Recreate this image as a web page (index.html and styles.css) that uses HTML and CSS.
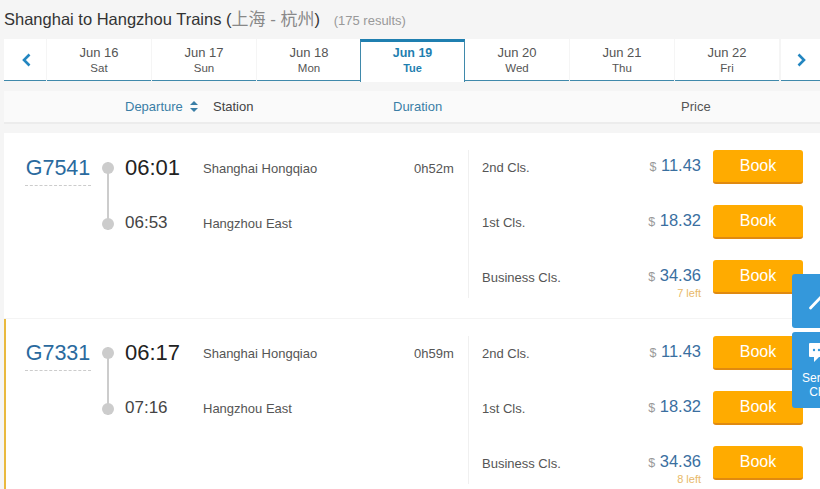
FILE: index.html
```html
<!DOCTYPE html>
<html lang="en">
<head>
  <meta charset="UTF-8" />
  <meta name="viewport" content="width=device-width, initial-scale=1.0" />
  <title>Shanghai to Hangzhou Trains</title>
  <link rel="stylesheet" href="styles.css">
</head>
<body>

  <div class="page">
    <h1 class="title">Shanghai to Hangzhou Trains (<span class="title-cn">上海 - 杭州</span>) <span class="results">(175 results)</span></h1>

    <div class="dates">
      <a class="date-arrow">
        <svg width="12" height="18" viewBox="0 0 12 18"><path d="M9.5 3.5 L4 9 L9.5 14.5" fill="none" stroke="#2386c0" stroke-width="2.6"/></svg>
      </a>
      <a class="date"><b>Jun 16</b><span>Sat</span></a>
      <a class="date"><b>Jun 17</b><span>Sun</span></a>
      <a class="date"><b>Jun 18</b><span>Mon</span></a>
      <a class="date active"><b>Jun 19</b><span>Tue</span></a>
      <a class="date"><b>Jun 20</b><span>Wed</span></a>
      <a class="date"><b>Jun 21</b><span>Thu</span></a>
      <a class="date"><b>Jun 22</b><span>Fri</span></a>
      <a class="date-arrow">
        <svg width="12" height="18" viewBox="0 0 12 18"><path d="M2.5 3.5 L8 9 L2.5 14.5" fill="none" stroke="#2386c0" stroke-width="2.6"/></svg>
      </a>
    </div>

    <div class="sort-bar">
      <div class="sort-departure">
        Departure
        <svg width="8" height="11" viewBox="0 0 8 11"><path d="M4 0 L8 4 H0 Z M0 7 H8 L4 11 Z" fill="#3a7ea6"/></svg>
      </div>
      <div class="sort-station">Station</div>
      <div class="sort-duration">Duration</div>
      <div class="sort-price">Price</div>
    </div>

    <div class="train">
      <div class="train-info">
        <div class="train-no"><a>G7541</a></div>
        <div class="line"><i></i><i></i></div>
        <div class="stops">
          <div class="stop first"><div class="time">06:01</div><div class="station">Shanghai Hongqiao</div><div class="duration">0h52m</div></div>
          <div class="stop"><div class="time">06:53</div><div class="station">Hangzhou East</div></div>
        </div>
      </div>
      <div class="seats">
        <div class="seat"><div class="seat-name">2nd Cls.</div><div class="price"><small>$</small> 11.43</div><button class="book">Book</button></div>
        <div class="seat"><div class="seat-name">1st Cls.</div><div class="price"><small>$</small> 18.32</div><button class="book">Book</button></div>
        <div class="seat"><div class="seat-name">Business Cls.</div><div class="price"><small>$</small> 34.36<em>7 left</em></div><button class="book">Book</button></div>
      </div>
    </div>

    <div class="train marked">
      <div class="train-info">
        <div class="train-no"><a>G7331</a></div>
        <div class="line"><i></i><i></i></div>
        <div class="stops">
          <div class="stop first"><div class="time">06:17</div><div class="station">Shanghai Hongqiao</div><div class="duration">0h59m</div></div>
          <div class="stop"><div class="time">07:16</div><div class="station">Hangzhou East</div></div>
        </div>
      </div>
      <div class="seats">
        <div class="seat"><div class="seat-name">2nd Cls.</div><div class="price"><small>$</small> 11.43</div><button class="book">Book</button></div>
        <div class="seat"><div class="seat-name">1st Cls.</div><div class="price"><small>$</small> 18.32</div><button class="book">Book</button></div>
        <div class="seat"><div class="seat-name">Business Cls.</div><div class="price"><small>$</small> 34.36<em>8 left</em></div><button class="book">Book</button></div>
      </div>
    </div>
  </div>

  <!-- floating side buttons -->
  <div class="side-tools">
    <a class="side-btn to-top">
      <svg width="30" height="30" viewBox="0 0 30 30"><path d="M3.5 22 L14 11 L25 22" fill="none" stroke="#fff" stroke-width="2.8" stroke-linecap="round"/></svg>
    </a>
    <a class="side-btn chat">
      <svg width="22" height="22" viewBox="0 0 22 22"><path d="M2 1 H20 Q21 1 21 2 V14 Q21 15 20 15 H11 L6 20 V15 H2 Q1 15 1 14 V2 Q1 1 2 1 Z" fill="#fff"/><circle cx="6" cy="8" r="1.2" fill="#3498db"/><circle cx="11" cy="8" r="1.2" fill="#3498db"/><circle cx="16" cy="8" r="1.2" fill="#3498db"/></svg>
      <span>Service Chat</span>
    </a>
  </div>

</body>
</html>
```

FILE: styles.css
```css
html, body {
  margin: 0;
  height: 489px;
  overflow: hidden;
}

body {
  font-family: "Liberation Sans", Arial, "Noto Sans CJK SC", sans-serif;
  background-color: #f5f5f5;
  color: #333;
}

.page {
  margin-left: 4px;
  width: 816px;
}

/* heading */
.title {
  margin: 0;
  height: 39px;
  padding-top: 7px;
  box-sizing: border-box;
  font-size: 16.5px;
  line-height: 24px;
  font-weight: normal;
  color: #333;
  white-space: nowrap;
}

.title-cn {
  font-size: 17px;
  color: #888;
}

.results {
  margin-left: 9px;
  font-size: 13px;
  color: #999;
}

/* date strip */
.dates {
  display: flex;
  height: 43px;
  width: 816px;
}

.date,
.date-arrow {
  display: flex;
  flex-direction: column;
  align-items: center;
  justify-content: center;
  box-sizing: border-box;
  background: #fff;
  border-bottom: 1px solid #3f89ab;
  height: 42px;
}

.date-arrow {
  width: 42px;
  flex: none;
  margin-right: 1px;
  padding-left: 1px;
}

.date-arrow:last-child {
  width: 39px;
  margin: 0 0 0 1px;
  padding-left: 3px;
}

.date {
  width: 104px;
  margin-right: 1px;
  flex: none;
  color: #555;
}

.date b {
  font-weight: normal;
  font-size: 13px;
  line-height: 16px;
}

.date span {
  font-size: 11.5px;
  line-height: 14px;
}

.date.active {
  height: 43px;
  width: 105px;
  margin-left: -2px;
  margin-right: 0;
  border: 1px solid #3f89ab;
  border-top: 3px solid #1f7fb0;
  border-bottom: 0;
  padding-bottom: 4px;
  color: #1f7fb0;
}

.date.active b,
.date.active span {
  font-weight: bold;
}

.date.active b {
  font-size: 12.5px;
}

.date.active span {
  font-size: 11px;
}

/* sort bar */
.sort-bar {
  display: flex;
  align-items: center;
  height: 33px;
  box-sizing: border-box;
  margin-top: 9px;
  width: 816px;
  background: #fafafa;
  border-bottom: 2px solid #ececec;
  font-size: 13px;
  color: #444;
}

.sort-departure {
  margin-left: 121px;
  width: 88px;
  color: #3a7ea6;
  display: flex;
  align-items: center;
  gap: 7px;
  flex: none;
}

.sort-station {
  width: 180px;
  flex: none;
}

.sort-duration {
  width: 288px;
  flex: none;
  color: #3a7ea6;
}

.sort-price {
  color: #555;
}

/* train cards */
.train {
  display: flex;
  background: #fff;
  height: 186px;
  box-sizing: border-box;
  margin-top: 9px;
  padding-top: 17px;
  border-bottom: 1px solid #f4f4f4;
}

.train.marked {
  margin-top: 0;
  padding-top: 16px;
  border-left: 2px solid #e9b93e;
}

.train-info {
  display: flex;
  width: 464px;
  flex: none;
  box-sizing: border-box;
  padding-left: 21px;
}

.train.marked .train-info {
  width: 462px;
  padding-left: 19px;
}

.train-no {
  width: 77px;
  flex: none;
  padding-top: 4px;
}

.train-no a {
  display: inline-block;
  width: 66px;
  padding-bottom: 3px;
  border-bottom: 1px dashed #ccc;
  color: #2a6a9e;
  font-size: 21.5px;
  line-height: 28px;
  text-align: center;
}

.line {
  width: 12px;
  height: 68px;
  margin-top: 12px;
  flex: none;
  display: flex;
  flex-direction: column;
  justify-content: space-between;
  align-items: center;
  background: linear-gradient(#ccc, #ccc) center / 2px 100% no-repeat;
}

.line i {
  display: block;
  width: 12px;
  height: 12px;
  border-radius: 50%;
  background: #ccc;
}

.stops {
  flex: 1;
  margin-left: 11px;
}

.stop {
  display: flex;
  align-items: center;
  height: 36px;
  padding-bottom: 2px;
  color: #555;
  font-size: 13px;
}

.stop.first {
  margin-bottom: 17px;
}

.time {
  width: 78px;
  flex: none;
  font-size: 17px;
  color: #444;
}

.first .time {
  font-size: 22px;
  color: #222;
}

.station {
  width: 211px;
  flex: none;
}

.seats {
  width: 352px;
  flex: none;
  height: 148px;
  border-left: 1px solid #f0f0f0;
  box-sizing: border-box;
  padding-left: 13px;
}

.marked .seats {
  margin-top: 1px;
}

.seat {
  display: flex;
  align-items: flex-start;
  height: 55px;
}

.seat-name {
  width: 139px;
  flex: none;
  font-size: 13px;
  color: #555;
  padding-top: 10px;
}

.price {
  width: 80px;
  flex: none;
  padding-top: 5px;
  text-align: right;
  font-size: 16.5px;
  line-height: 21px;
  color: #3a6f9f;
}

.price small {
  font-size: 12.5px;
  color: #999;
}

.price em {
  display: block;
  font-style: normal;
  font-size: 11px;
  line-height: 10px;
  color: #e8b969;
}

.book {
  width: 90px;
  height: 34px;
  margin-left: 12px;
  border: none;
  border-bottom: 2px solid #e08a10;
  border-radius: 3px;
  background: #ffab00;
  color: #fff;
  font-family: inherit;
  font-size: 16px;
  padding: 0;
}

/* floating side buttons */
.side-tools {
  position: absolute;
  left: 792px;
  top: 274px;
  width: 60px;
}

.side-btn {
  display: block;
  background: #3498db;
  border-radius: 3px;
  color: #fff;
  text-align: center;
}

.to-top {
  height: 54px;
  padding-top: 12px;
  box-sizing: border-box;
  margin-bottom: 4px;
}

.chat {
  height: 76px;
  padding-top: 10px;
  box-sizing: border-box;
  font-size: 12px;
  line-height: 14px;
}

.chat svg {
  display: block;
  margin-left: 16px;
}

.chat span {
  display: block;
  width: 50px;
  margin: 7px auto 0;
}
```
